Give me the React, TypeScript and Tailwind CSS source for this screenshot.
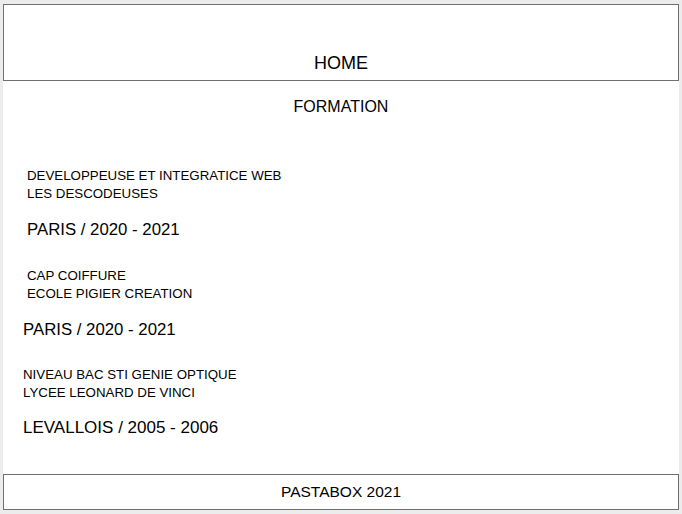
const font = { fontFamily: '"Liberation Sans", Arial, Helvetica, sans-serif' }

export default function App() {
  return (
    <div className="h-[514px] w-[682px] bg-[#ececec] pt-[4px] pb-[4px] pl-[3px] pr-[3px]" style={font}>
      <div className="flex h-full flex-col bg-white text-black">
        <header className="flex h-[77px] items-end justify-center border border-[#6f6f6f] pb-[6px]">
          <span className="text-[18px] leading-[22px]">HOME</span>
        </header>

        <h2 className="mt-[16px] text-center text-[16px] leading-[20px]">FORMATION</h2>

        {/* formation 1 */}
        <div className="mt-[50px] pl-[24px] text-[13.3px] leading-[18px]">
          <p>DEVELOPPEUSE ET INTEGRATICE WEB</p>
          <p>LES DESCODEUSES</p>
        </div>
        <p className="mt-[17px] pl-[24px] text-[16.8px] leading-[20px]">PARIS / 2020 - 2021</p>

        {/* formation 2 */}
        <div className="mt-[27px] pl-[24px] text-[13.3px] leading-[18px]">
          <p>CAP COIFFURE</p>
          <p>ECOLE PIGIER CREATION</p>
        </div>
        <p className="mt-[17px] pl-[20px] text-[16.8px] leading-[20px]">PARIS / 2020 - 2021</p>

        {/* formation 3 */}
        <div className="mt-[26px] pl-[20px] text-[13.3px] leading-[18px]">
          <p>NIVEAU BAC STI GENIE OPTIQUE</p>
          <p>LYCEE LEONARD DE VINCI</p>
        </div>
        <p className="mt-[16px] pl-[20px] text-[17px] leading-[20px]">LEVALLOIS / 2005 - 2006</p>

        <footer className="mt-auto flex h-[36px] items-center justify-center border border-[#6f6f6f]">
          <span className="text-[15.5px] leading-[20px]">PASTABOX 2021</span>
        </footer>
      </div>
    </div>
  )
}
